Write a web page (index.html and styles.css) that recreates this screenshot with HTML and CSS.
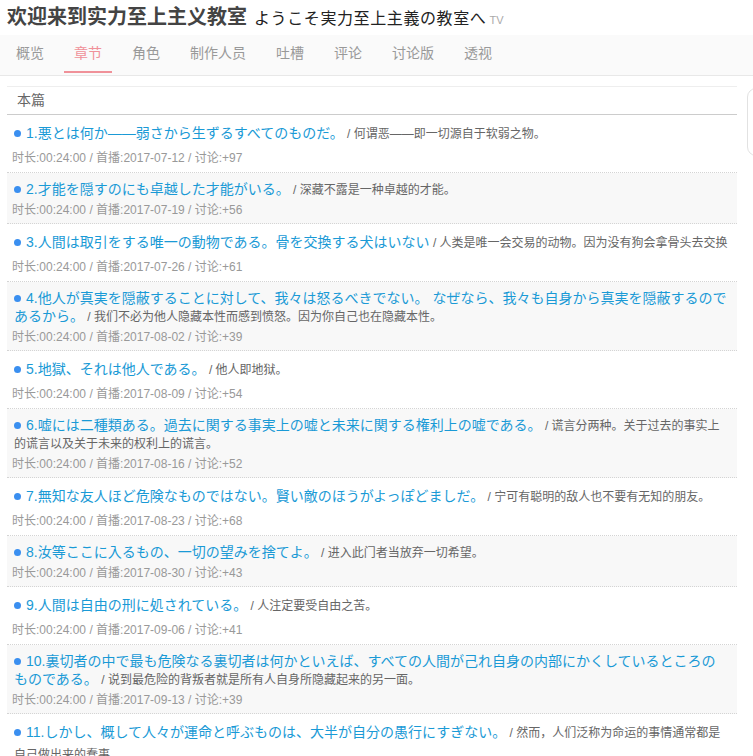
FILE: index.html
```html
<!DOCTYPE html>
<html>
	<head>
		<meta charset="utf-8">
		<link rel="stylesheet" href="styles.css">
	</head>
	<body>
		<h1 class="nameSingle">欢迎来到实力至上主义教室<span class="jp" lang="ja">ようこそ実力至上主義の教室へ</span><small class="tv">TV</small></h1>
		<div class="navTabs">
			<a class="tab">概览</a>
			<a class="tab focus">章节</a>
			<a class="tab">角色</a>
			<a class="tab">制作人员</a>
			<a class="tab">吐槽</a>
			<a class="tab">评论</a>
			<a class="tab">讨论版</a>
			<a class="tab">透视</a>
		</div>
		<div id="wrapper">
			<div id="columnA">
				<div class="subhead">本篇</div>
				<ul class="epList">
					<li class="odd">
						<h6><span class="dot"></span><a lang="ja">1.悪とは何か——弱さから生ずるすべてのものだ。</a><span class="sub"> / 何谓恶——即一切源自于软弱之物。</span></h6>
						<small class="tip">时长:00:24:00 / 首播:2017-07-12 / 讨论:+97</small>
					</li>
					<li class="even">
						<h6><span class="dot"></span><a lang="ja">2.才能を隠すのにも卓越した才能がいる。</a><span class="sub"> / 深藏不露是一种卓越的才能。</span></h6>
						<small class="tip">时长:00:24:00 / 首播:2017-07-19 / 讨论:+56</small>
					</li>
					<li class="odd">
						<h6><span class="dot"></span><a lang="ja">3.人間は取引をする唯一の動物である。骨を交換する犬はいない</a><span class="sub"> / 人类是唯一会交易的动物。因为没有狗会拿骨头去交换</span></h6>
						<small class="tip">时长:00:24:00 / 首播:2017-07-26 / 讨论:+61</small>
					</li>
					<li class="even">
						<h6><span class="dot"></span><a lang="ja">4.他人が真実を隠蔽することに対して、我々は怒るべきでない。 なぜなら、我々も自身から真実を隠蔽するのであるから。</a><span class="sub"> / 我们不必为他人隐藏本性而感到愤怒。因为你自己也在隐藏本性。</span></h6>
						<small class="tip">时长:00:24:00 / 首播:2017-08-02 / 讨论:+39</small>
					</li>
					<li class="odd">
						<h6><span class="dot"></span><a lang="ja">5.地獄、それは他人である。</a><span class="sub"> / 他人即地狱。</span></h6>
						<small class="tip">时长:00:24:00 / 首播:2017-08-09 / 讨论:+54</small>
					</li>
					<li class="even">
						<h6><span class="dot"></span><a lang="ja">6.嘘には二種類ある。過去に関する事実上の嘘と未来に関する権利上の嘘である。</a><span class="sub"> / 谎言分两种。关于过去的事实上的谎言以及关于未来的权利上的谎言。</span></h6>
						<small class="tip">时长:00:24:00 / 首播:2017-08-16 / 讨论:+52</small>
					</li>
					<li class="odd">
						<h6><span class="dot"></span><a lang="ja">7.無知な友人ほど危険なものではない。賢い敵のほうがよっぽどましだ。</a><span class="sub"> / 宁可有聪明的敌人也不要有无知的朋友。</span></h6>
						<small class="tip">时长:00:24:00 / 首播:2017-08-23 / 讨论:+68</small>
					</li>
					<li class="even">
						<h6><span class="dot"></span><a lang="ja">8.汝等ここに入るもの、一切の望みを捨てよ。</a><span class="sub"> / 进入此门者当放弃一切希望。</span></h6>
						<small class="tip">时长:00:24:00 / 首播:2017-08-30 / 讨论:+43</small>
					</li>
					<li class="odd">
						<h6><span class="dot"></span><a lang="ja">9.人間は自由の刑に処されている。</a><span class="sub"> / 人注定要受自由之苦。</span></h6>
						<small class="tip">时长:00:24:00 / 首播:2017-09-06 / 讨论:+41</small>
					</li>
					<li class="even">
						<h6><span class="dot"></span><a lang="ja">10.裏切者の中で最も危険なる裏切者は何かといえば、すべての人間が己れ自身の内部にかくしているところのものである。</a><span class="sub"> / 说到最危险的背叛者就是所有人自身所隐藏起来的另一面。</span></h6>
						<small class="tip">时长:00:24:00 / 首播:2017-09-13 / 讨论:+39</small>
					</li>
					<li class="odd">
						<h6><span class="dot"></span><a lang="ja">11.しかし、概して人々が運命と呼ぶものは、大半が自分の愚行にすぎない。</a><span class="sub"> / 然而，人们泛称为命运的事情通常都是自己做出来的蠢事。</span></h6>
						<small class="tip">时长:00:24:00 / 首播:2017-09-20 / 讨论:+45</small>
					</li>
				</ul>
			</div>
			<div id="columnB">
				<div class="sideCard"></div>
			</div>
		</div>
	</body>
</html>
```
FILE: styles.css
```css
html {
	overflow: hidden;
}
body {
	margin: 0;
	background-color: white;
	font-family: "Liberation Sans", "Noto Sans CJK SC", sans-serif;
	color: #444;
}
[lang="ja"] {
	font-family: "Liberation Sans", "Noto Sans CJK JP", sans-serif;
}
.nameSingle {
	margin: 0;
	padding: 0 7px;
	height: 35px;
	line-height: 35px;
	font-size: 20px;
	font-weight: bold;
	color: #444;
	white-space: nowrap;
}
.nameSingle .jp {
	margin-left: 7px;
	font-size: 16px;
	font-weight: normal;
	letter-spacing: 0.6px;
	color: #222;
}
.nameSingle .tv {
	margin-left: 3px;
	font-size: 11px;
	font-weight: normal;
	color: #aaa;
}
.navTabs {
	display: flex;
	height: 40px;
	padding-left: 6px;
	background-color: #fafafa;
	border-bottom: 1px solid #e8e8e8;
}
.tab {
	padding: 0 10px;
	margin-right: 10px;
	line-height: 36px;
	height: 36px;
	border-bottom: 2px solid transparent;
	font-size: 14px;
	color: #999;
}
.tab.focus {
	color: #f09199;
	border-bottom-color: #f09199;
}
#wrapper {
	display: flex;
	gap: 10px;
	padding-left: 7px;
}
#columnA {
	flex: 0 0 730px;
	margin-top: 10px;
}
#columnB {
	flex: 0 0 260px;
	margin-top: 12px;
}
.sideCard {
	height: 66px;
	border: 1px solid #e2e2e2;
	border-radius: 9px;
	background-color: white;
}
.subhead {
	border-top: 1px solid #eee;
	border-bottom: 1px solid #ccc;
	padding: 0 10px;
	line-height: 27px;
	font-size: 14px;
	color: #666;
}
.epList {
	list-style: none;
	margin: 0;
	padding: 0;
}
.epList li {
	padding: 7px 8px 4px 5px;
	border-bottom: 1px dotted #d4d4d4;
}
.epList li.even {
	background-color: #f8f8f8;
	padding-bottom: 3px;
}
.epList h6 {
	margin: 0;
	padding-left: 2px;
	font-size: 14px;
	font-weight: normal;
	line-height: 22px;
}
.epList li.even h6 {
	line-height: 18px;
}
.epList h6 a {
	color: #1a9ad6;
}
.dot {
	display: inline-block;
	width: 7px;
	height: 7px;
	margin-right: 5px;
	border-radius: 50%;
	background-color: #3a8ff0;
	vertical-align: 1px;
}
.sub {
	font-size: 12px;
	line-height: 1;
	color: #666;
}
.tip {
	display: block;
	margin-top: 4px;
	line-height: 20px;
	font-size: 12px;
	color: #999;
}
.epList li.even .tip {
	margin-top: 2px;
}
```
